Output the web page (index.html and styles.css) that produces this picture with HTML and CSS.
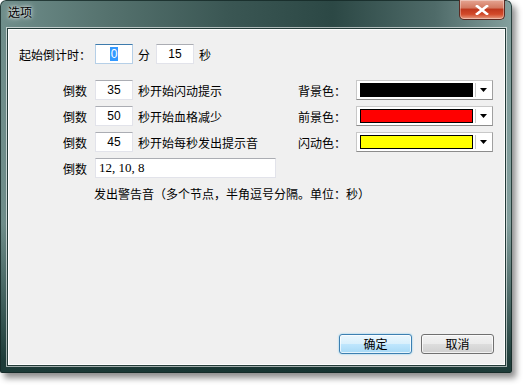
FILE: index.html
```html
<!DOCTYPE html>
<html lang="zh-CN">
<head>
<meta charset="utf-8">
<title>选项</title>
<link rel="stylesheet" href="styles.css">
</head>
<body>
<div class="window">
  <div class="titlebar">
    <span class="title">选项</span>
    <div class="close"><svg width="14" height="10" viewBox="0 0 14 10"><path d="M2 1 L12 9 M12 1 L2 9" stroke="#fff" stroke-width="2.6" stroke-linecap="square"/></svg></div>
  </div>
  <div class="client">
    <div class="form">
      <div class="row">
        <span class="lbl-start">起始倒计时：</span>
        <span class="input focused"><span class="sel">0</span></span>
        <span class="unit">分</span>
        <span class="input">15</span>
        <span class="unit2">秒</span>
      </div>
      <div class="row first">
        <div class="left">
          <span class="lbl">倒数</span>
          <span class="input">35</span>
          <span class="txt">秒开始闪动提示</span>
        </div>
        <span class="clbl">背景色：</span>
        <div class="combo"><span class="swatch black"></span><span class="arrow"><svg width="7" height="4" viewBox="0 0 7 4"><path d="M0 0H7L3.5 4Z" fill="#000"/></svg></span></div>
      </div>
      <div class="row">
        <div class="left">
          <span class="lbl">倒数</span>
          <span class="input">50</span>
          <span class="txt">秒开始血格减少</span>
        </div>
        <span class="clbl">前景色：</span>
        <div class="combo"><span class="swatch red"></span><span class="arrow"><svg width="7" height="4" viewBox="0 0 7 4"><path d="M0 0H7L3.5 4Z" fill="#000"/></svg></span></div>
      </div>
      <div class="row">
        <div class="left">
          <span class="lbl">倒数</span>
          <span class="input">45</span>
          <span class="txt">秒开始每秒发出提示音</span>
        </div>
        <span class="clbl">闪动色：</span>
        <div class="combo"><span class="swatch yellow"></span><span class="arrow"><svg width="7" height="4" viewBox="0 0 7 4"><path d="M0 0H7L3.5 4Z" fill="#000"/></svg></span></div>
      </div>
      <div class="row">
        <div class="left">
          <span class="lbl">倒数</span>
          <span class="input wide">12, 10, 8</span>
        </div>
      </div>
      <div class="hint">发出警告音（多个节点，半角逗号分隔。单位：秒）</div>
    </div>
    <div class="buttons">
      <span class="btn default">确定</span>
      <span class="btn">取消</span>
    </div>
  </div>
</div>
</body>
</html>
```
FILE: styles.css
```css
html, body {
  margin: 0;
  padding: 0;
  background: #ffffff;
}
body {
  width: 528px;
  height: 388px;
  overflow: hidden;
  font: 12px "Noto Sans CJK SC", "Liberation Sans", sans-serif;
  color: #000;
}
.window {
  position: relative;
  width: 512px;
  height: 373px;
  border-radius: 6px 6px 2px 2px;
  background:
    linear-gradient(to bottom, rgba(0,0,0,0) 60%, rgba(20,50,47,0.9) 97%),
    linear-gradient(to right, #6f8e8b 0%, #56736f 20%, #3a5653 45%, #2c4845 65%, #4f6b69 85%, #84a09e 100%);
  box-shadow: 4px 5px 6px rgba(0,0,0,0.45), inset 0 0 0 1px rgba(20,40,38,0.8);
  display: flex;
  flex-direction: column;
  box-sizing: border-box;
}
.titlebar {
  height: 28px;
  flex: none;
  position: relative;
}
.title {
  position: absolute;
  left: 8px;
  top: 4px;
  font-size: 12px;
  line-height: 16px;
  color: #000;
  text-shadow: 0 0 6px rgba(255,255,255,0.9), 0 0 3px rgba(255,255,255,0.9);
}
.close {
  position: absolute;
  top: 0;
  right: 7px;
  width: 46px;
  height: 20px;
  box-sizing: border-box;
  border: 1px solid #5a2a22;
  border-top: none;
  border-radius: 0 0 5px 5px;
  background: linear-gradient(to bottom, #e5a592 0%, #d37a62 40%, #c0391e 50%, #d24a2a 75%, #e79c80 100%);
  display: flex;
  align-items: center;
  justify-content: center;
  box-shadow: inset 0 0 0 1px rgba(255,255,255,0.35);
}
.client {
  flex: 1;
  margin: 0 6px 7px 7px;
  background: #f0f0f0;
  border: 1px solid #233b38;
  box-shadow: 0 0 0 1px rgba(255,255,255,0.6), inset 0 0 0 1px #ffffff;
  display: flex;
  flex-direction: column;
}
.form {
  padding: 15px 0 0 11px;
  display: flex;
  flex-direction: column;
  gap: 6px;
}
.row {
  display: flex;
  align-items: center;
  height: 20px;
}
.row.first {
  margin-top: 10px;
}
.lbl-start {
  width: 76px;
  flex: none;
  white-space: nowrap;
}
.input {
  box-sizing: border-box;
  width: 38px;
  height: 20px;
  flex: none;
  background: #fff;
  border: 1px solid #e2e3ea;
  border-top-color: #abadb3;
  display: flex;
  align-items: center;
  justify-content: center;
  font: 12px "Liberation Sans", sans-serif;
}
.input.focused {
  border-color: #b5cfe7;
  border-top-color: #3d7bad;
}
.sel {
  background: #3399ff;
  color: #fff;
  padding: 0 1px;
  line-height: 14px;
}
.input.wide {
  width: 181px;
  justify-content: flex-start;
  padding-left: 3px;
  font-family: "Liberation Serif", serif;
  font-size: 13px;
}
.unit {
  margin: 0 6px 0 5px;
}
.unit2 {
  margin-left: 5px;
}
.left {
  width: 279px;
  flex: none;
  display: flex;
  align-items: center;
}
.lbl {
  width: 76px;
  box-sizing: border-box;
  padding-right: 8px;
  text-align: right;
  flex: none;
}
.txt {
  margin-left: 5px;
  white-space: nowrap;
}
.clbl {
  width: 58px;
  flex: none;
}
.combo {
  box-sizing: border-box;
  width: 137px;
  height: 20px;
  background: #fff;
  border: 1px solid #c8c8c8;
  border-bottom-color: #8c8c8c;
  border-right-color: #a0a0a0;
  display: flex;
  align-items: stretch;
  padding: 2px 1px 2px 3px;
  gap: 2px;
}
.swatch {
  flex: 1;
  border: 1px solid #000;
}
.black { background: #000; }
.red { background: #ff0000; }
.yellow { background: #ffff00; }
.arrow {
  width: 15px;
  flex: none;
  border-left: 1px solid #c8c8c8;
  display: flex;
  align-items: center;
  justify-content: center;
}
.hint {
  margin: 2px 0 0 75px;
  line-height: 16px;
}
.buttons {
  margin-top: auto;
  display: flex;
  justify-content: flex-end;
  gap: 9px;
  padding: 0 11px 11px 0;
}
.btn {
  box-sizing: border-box;
  width: 73px;
  height: 20px;
  border: 1px solid #707070;
  border-radius: 3px;
  background: linear-gradient(to bottom, #f2f2f2 0%, #ebebeb 48%, #dddddd 52%, #cfcfcf 100%);
  box-shadow: inset 0 0 0 1px rgba(255,255,255,0.7);
  display: flex;
  align-items: center;
  justify-content: center;
  line-height: 16px;
}
.btn.default {
  border-color: #3c7fb1;
  background: linear-gradient(to bottom, #eaf6fd 0%, #d9f0fc 48%, #bee6fd 52%, #a7d9f5 100%);
  box-shadow: inset 0 0 0 1px rgba(255,255,255,0.7), 0 0 2px #6ec6f0;
}
```
